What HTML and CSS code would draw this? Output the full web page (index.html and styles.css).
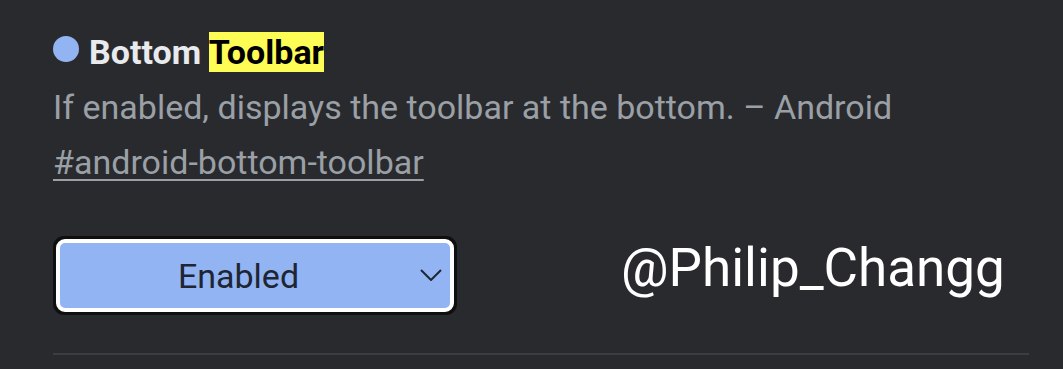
FILE: index.html
```html
<!DOCTYPE html>
<html>
<head>
<meta charset="utf-8">
<link rel="stylesheet" href="styles.css">
</head>
<body>
<div class="experiment">
  <div class="title-row">
    <span class="dot"></span>
    <h3 class="title">Bottom <span class="highlight">Toolbar</span></h3>
  </div>
  <p class="desc">If enabled, displays the toolbar at the bottom. – Android</p>
  <div class="link-row"><a class="permalink" href="#android-bottom-toolbar">#android-bottom-toolbar</a></div>
  <div class="controls">
    <div class="select-wrap">
      <div class="select">
        <span class="select-label">Enabled</span>
        <svg class="chevron" width="22" height="12" viewBox="0 0 22 12"><path d="M1 1 L11 11 L21 1" fill="none" stroke="#1e2533" stroke-width="2"/></svg>
      </div>
    </div>
    <div class="watermark">@Philip_Changg</div>
  </div>
  <div class="divider"></div>
</div>
</body>
</html>
```

FILE: styles.css
```css
html, body {
  margin: 0;
  padding: 0;
  background: #292a2e;
}
body {
  font-family: Roboto, "Noto Sans", sans-serif;
  width: 1063px;
  height: 369px;
  overflow: hidden;
}
.experiment {
  padding: 32px 34px 0 53px;
}
.title-row {
  display: flex;
  align-items: flex-start;
  gap: 10px;
  height: 40px;
}
.dot {
  width: 26px;
  height: 26px;
  margin-top: 4px;
  border-radius: 50%;
  background: #93b4f3;
  flex: none;
}
.title {
  margin: 0;
  font-size: 34px;
  font-weight: 700;
  color: #e8eaed;
  line-height: 40px;
}
.highlight {
  background: #fdfd55;
  color: #000;
}
.desc {
  margin: 15px 0 0 0;
  font-size: 34px;
  line-height: 40px;
  color: #9aa0a6;
}
.link-row {
  display: flex;
  margin-top: 15px;
  height: 40px;
}
.permalink {
  font-size: 34px;
  line-height: 40px;
  color: #9aa0a6;
  text-decoration: underline;
  text-underline-offset: 5px;
  text-decoration-thickness: 2px;
}
.controls {
  display: flex;
  align-items: center;
  margin-top: 54px;
}
.select-wrap {
  width: 404px;
  height: 79px;
  box-sizing: border-box;
  border: 3px solid #0f0f10;
  border-radius: 11px;
  background: #0f0f10;
  flex: none;
}
.select {
  box-sizing: border-box;
  width: 100%;
  height: 100%;
  border: 4px solid #ffffff;
  border-radius: 9px;
  background: #93b4f3;
  display: flex;
  align-items: center;
  justify-content: center;
  position: relative;
}
.select-label {
  font-size: 34px;
  line-height: 40px;
  color: #1e2533;
  margin-left: -33px;
}
.chevron {
  position: absolute;
  right: 8px;
  top: 26px;
}
.watermark {
  margin-left: 164px;
  margin-top: -16px;
  font-size: 53px;
  color: #ffffff;
  line-height: 60px;
}
.divider {
  margin-top: 38px;
  height: 2px;
  background: #3c3d42;
  width: 976px;
}
```
